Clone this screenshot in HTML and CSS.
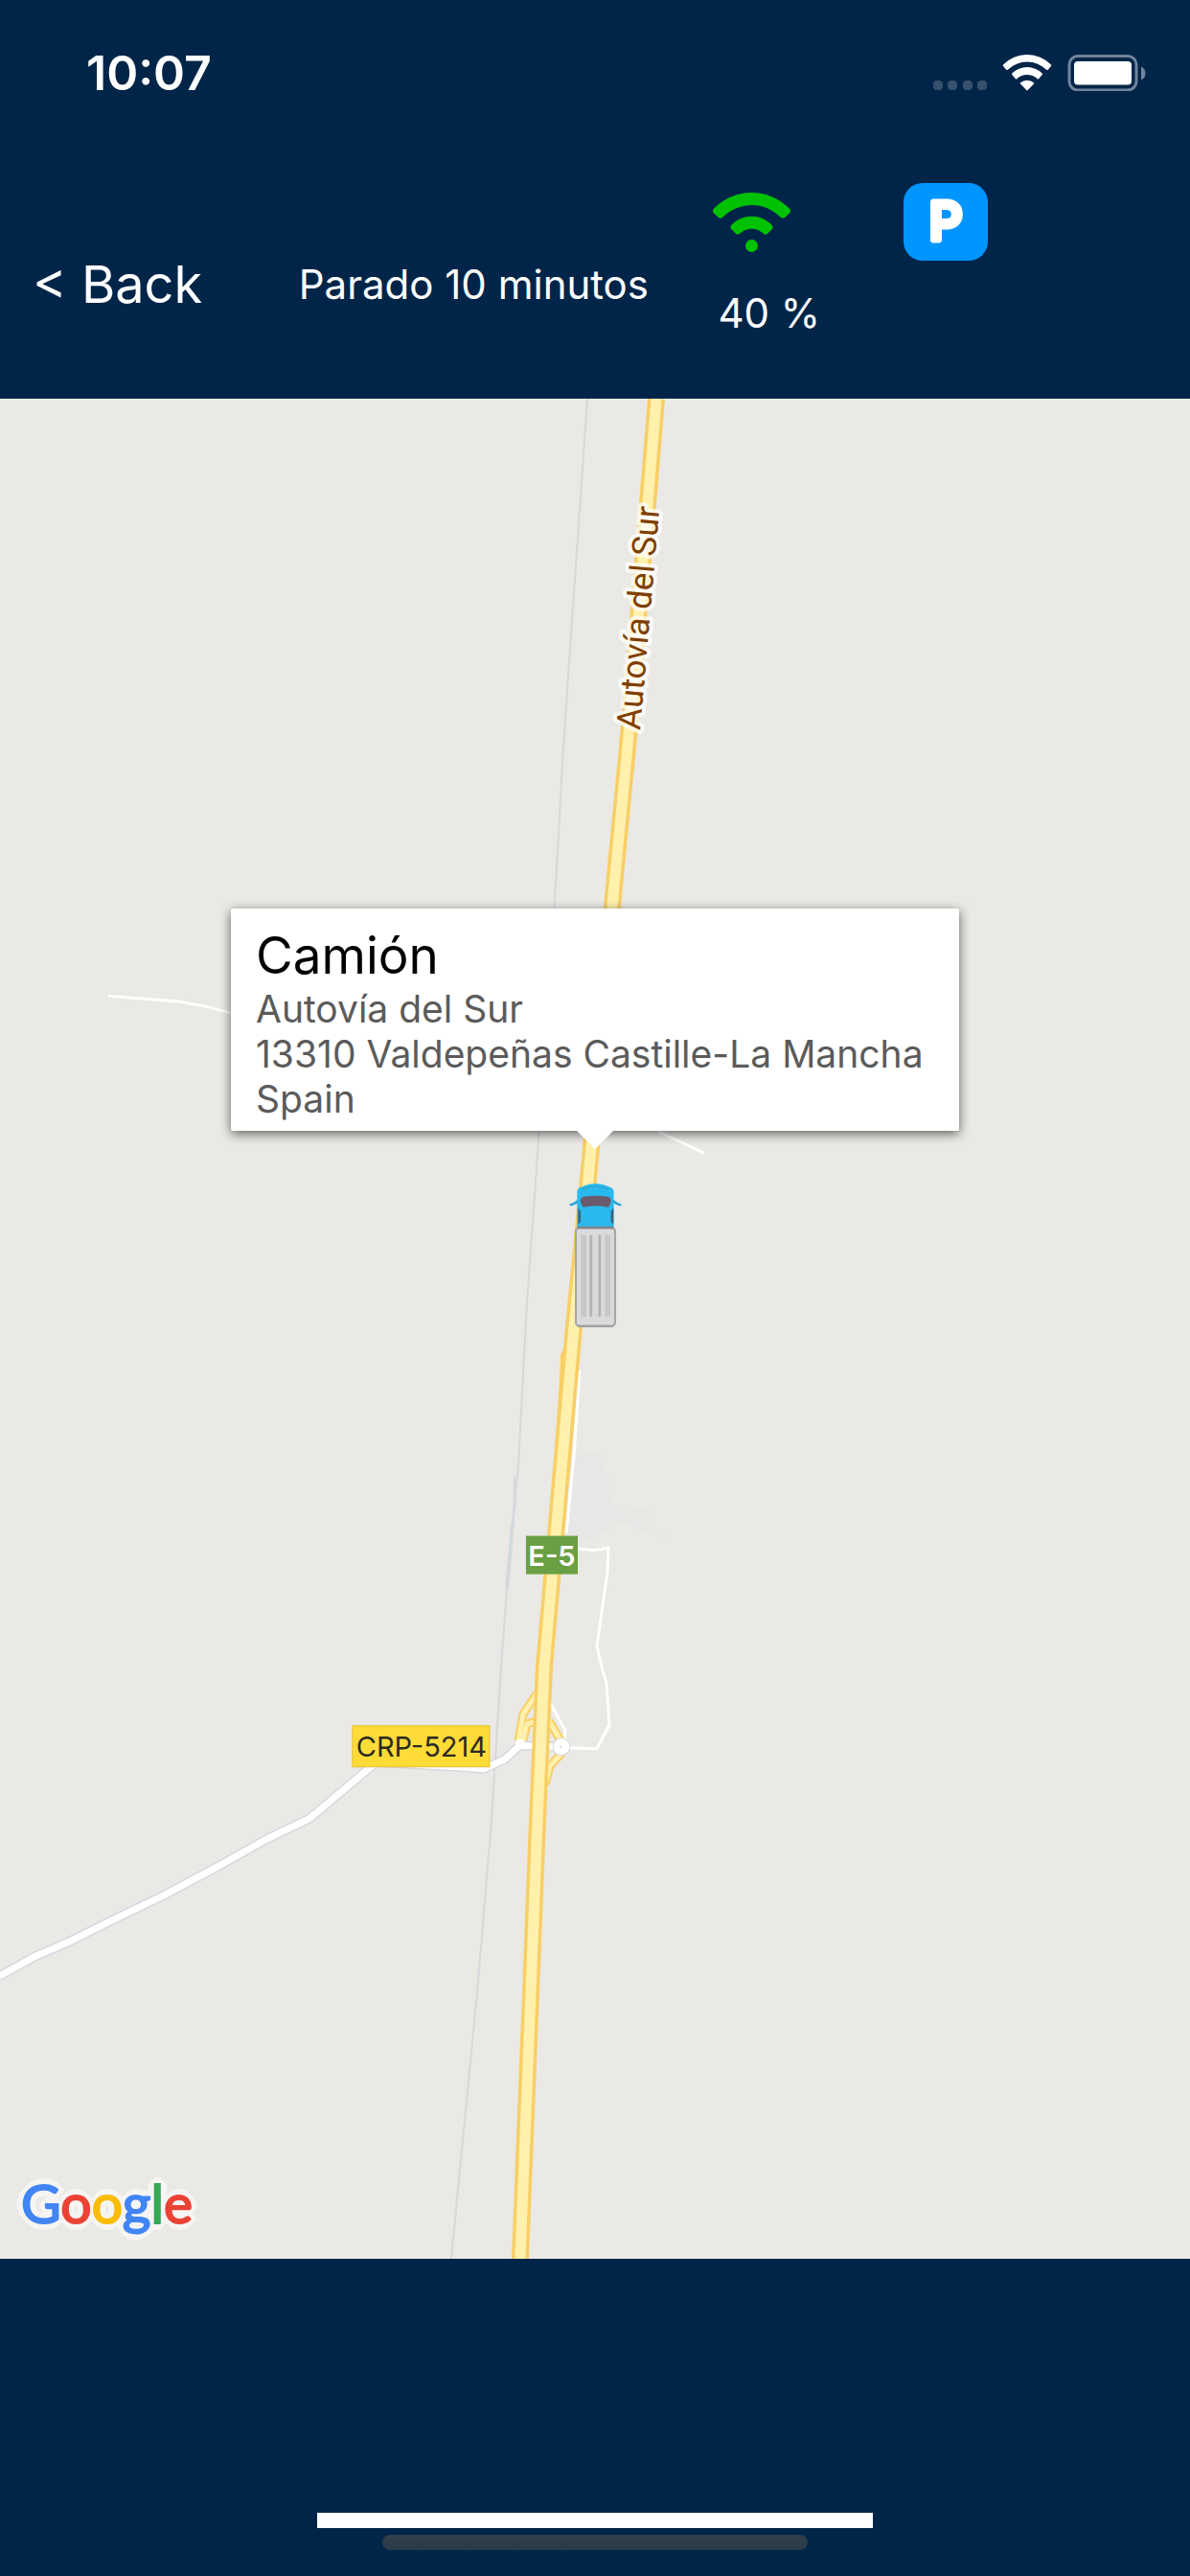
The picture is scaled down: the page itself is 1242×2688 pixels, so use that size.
FILE: index.html
```html
<!DOCTYPE html>
<html lang="es">
<head>
  <meta charset="UTF-8" />
  <meta name="viewport" content="width=device-width, initial-scale=1.0"/>
  <title>Camión</title>
  <link rel="stylesheet" href="styles.css">
</head>
<body>

  <header class="header">
    <div class="status-bar">
      <span class="clock">10:07</span>
      <svg class="status-icons" viewBox="0 0 222 38" aria-hidden="true">
        <g fill="#36506d">
          <rect x="0" y="27" width="10" height="10" rx="4"/>
          <rect x="15" y="27" width="10" height="10" rx="4"/>
          <rect x="31" y="27" width="10" height="10" rx="4"/>
          <rect x="46" y="27" width="10" height="10" rx="4"/>
        </g>
        <g fill="#fff">
          <path d="M73 10.500a35 35 0 0 1 50 0q.6.800 0 1.600l-3.200 3.600q-.8.800-1.600 0a29 29 0 0 0-40.400 0q-.8.800-1.600 0L73 12.100q-.6-.8 0-1.600z"/>
          <path d="M82.300 19.500a22.500 22.500 0 0 1 31.400 0q.7.700 0 1.500l-3.600 4.200q-.7.600-1.500 0a15.500 15.500 0 0 0-21.200 0q-.8.600-1.500 0L82.300 21q-.7-.8 0-1.500z"/>
          <path d="M91 29.300a10.500 10.500 0 0 1 14 0q.6.600 0 1.300l-6.300 6.400q-.7.700-1.400 0L91 30.600q-.6-.7 0-1.300z"/>
        </g>
        <rect x="142" y="1.500" width="70" height="35.500" rx="9" fill="none" stroke="#71839a" stroke-width="3"/>
        <rect x="147" y="7" width="60" height="24.500" rx="4" fill="#fff"/>
        <path d="M217 12.500q4.500 2 4.500 7t-4.500 7z" fill="#71839a"/>
      </svg>
    </div>

    <nav class="nav">
      <button type="button" class="back">&lt; Back</button>
      <span class="state">Parado 10 minutos</span>
      <div class="signal">
        <svg class="signal-icon" viewBox="0 0 81 62" aria-hidden="true">
          <g fill="#00c200">
            <path d="M1.200 16.500C23-5.500 58-5.500 79.800 16.500q2.400 2.700 0 5.200l-4.800 4.300q-2 1.600-4 0C54.500 8.500 26.500 8.500 10 26q-2 1.600-4 0l-4.800-4.300q-2.400-2.500 0-5.200z"/>
            <path d="M19.300 34c12-12.300 30.400-12.300 42.400 0q1.800 2 0 4l-4.900 5q-1.800 1.500-3.600 0c-7.200-7-18.200-7-25.400 0q-1.800 1.500-3.600 0l-4.900-5q-1.800-2 0-4z"/>
            <circle cx="40.500" cy="55.500" r="6.500"/>
          </g>
        </svg>
        <span class="signal-value">40 %</span>
      </div>
      <svg class="parking" viewBox="0 0 88 81">
        <rect width="88" height="81" rx="20"/>
        <text x="44" y="59">P</text>
      </svg>
    </nav>
  </header>

  <main class="map">
    <svg class="map-tiles" viewBox="0 417 1242 1940" preserveAspectRatio="xMidYMid slice" aria-label="Mapa">
      <!-- urban area -->
      <path d="M598 1512l36 6-5 15 14 16-3 22 40 3-4 6-20-1 42 23-7 4-43-18-32 20h-28z" fill="#e7e7e6"/>

      <!-- railway -->
      <path class="rail" d="M613 417L588 780L580 925L560 1220L550 1360L541 1530L529 1660L523 1740L513 1900L498 2080L471 2357"/>
      <path class="rail" d="M537 1540L536 1590L530 1660M538 1568L534 1592L528 1660"/>

      <!-- minor tracks -->
      <g class="track">
        <path d="M113 1040L188 1046L216 1051L242 1058"/>
        <path d="M687 1181L697 1186L712 1193L735 1204"/>
        <path d="M605 1430L599 1520L591 1600"/>
        <path d="M600 1616L618 1618L628 1617L635 1615L634 1640L623 1718L628 1740L633 1757L636 1800L623 1825L594 1824"/>
        <path d="M574 1777L590 1806L589 1816"/>
      </g>

      <!-- CRP-5214 -->
      <g class="local">
        <path class="casing" d="M0 2062L36 2042L71 2027L121 2002L171 1978L229 1947L279 1919L323 1898L393 1839L478 1844L505 1846L527 1836L542 1822L560 1822L586 1823"/>
        <path class="fill" d="M0 2062L36 2042L71 2027L121 2002L171 1978L229 1947L279 1919L323 1898L393 1839L478 1844L505 1846L527 1836L542 1822L560 1822L586 1823"/>
      </g>

      <!-- highway exits -->
      <g class="ramp">
        <path class="casing" d="M560 1768L546 1789L541 1817M558 1797L550 1799L546 1816M573 1796L586 1818M587 1829L574 1843L569 1862"/>
        <path class="fill" d="M560 1768L546 1789L541 1817M558 1797L550 1799L546 1816M573 1796L586 1818M587 1829L574 1843L569 1862"/>
      </g>
      <circle cx="543" cy="1820" r="5" fill="#fff"/>
      <circle cx="586" cy="1823" r="9" fill="#fff" stroke="#d5d8dc" stroke-width="1"/>
      <circle cx="585" cy="1823" r="1" fill="#c9ccd0"/>

      <!-- Autovía del Sur -->
      <path d="M590 1408L587 1415L586 1440L580 1530" fill="none" stroke="#f7cf66" stroke-width="4"/>
      <g class="highway">
        <path class="casing" d="M685 417L655 780L641 925L615 1220L599 1385L575 1660L568 1740L561 1900L554 2080L543 2357"/>
        <path class="fill" d="M685 417L655 780L641 925L615 1220L599 1385L575 1660L568 1740L561 1900L554 2080L543 2357"/>
      </g>

      <text class="road-name" transform="translate(668 763) rotate(-85)">Autovía del Sur</text>

      <rect x="549" y="1603" width="54" height="40" fill="#6a9f43"/>
      <text class="shield shield-e" x="576" y="1634">E-5</text>
      <rect x="368" y="1801" width="143" height="43" fill="#ffdb38" stroke="#e2c138"/>
      <text class="shield" x="440" y="1833">CRP-5214</text>
    </svg>

    <div class="marker">
      <div class="callout">
        <h1>Camión</h1>
        <p>Autovía del Sur<br>13310 Valdepeñas Castille-La Mancha<br>Spain</p>
      </div>
      <svg class="truck" viewBox="0 0 170 456" aria-hidden="true">
        <path d="M4 66q14-3 28-15l4 8q-16 13-30 14zM166 66q-14-3-28-15l-4 8q16 13 30 14z" fill="#2ba6d8"/>
        <path d="M28 138V30q0-14 17-18Q84-6 125 12q17 4 17 18v108z" fill="#28b9ee"/>
        <path d="M44 20q40-15 82 0" fill="none" stroke="#35a5cf" stroke-width="4"/>
        <path d="M38 58q0-14 14-15 34-5 68 0 14 1 14 15l-8 19q-40-10-80 0z" fill="#695b6d"/>
        <path d="M31 78l8 12v32l-8 8zM141 78l-8 12v32l8 8z" fill="#42617d"/>
        <rect x="24" y="141" width="122" height="305" rx="10" fill="#dadadc" stroke="#a5a5a6" stroke-width="6"/>
        <path d="M28 140h114" stroke="#858588" stroke-width="7"/>
        <path d="M48 163v254M123 163v254" stroke="#c7c7c9" stroke-width="17"/>
        <path d="M71 163v254M98 163v254" stroke="#b3b3b5" stroke-width="8"/>
        <path d="M30 447h110" stroke="#a0a0a1" stroke-width="6"/>
      </svg>
    </div>

    <a class="logo" href="#"><span class="blue">G</span><span class="red">o</span><span class="yellow">o</span><span class="blue">g</span><span class="green">l</span><span class="red">e</span></a>
  </main>

  <footer class="footer">
    <div class="bar"></div>
    <div class="home-indicator"></div>
  </footer>

</body>
</html>
```
FILE: styles.css
```css
* { box-sizing: border-box; }

body {
  margin: 0;
  padding: 0;
  font-family: Inter, 'Liberation Sans', sans-serif;
  background: #002548;
  color: white;
  display: flex;
  flex-direction: column;
  min-height: 100vh;
}

/* Header */
.status-bar {
  display: flex;
  justify-content: space-between;
  align-items: center;
  height: 152px;
  padding: 0 46px 0 90px;
}

.clock {
  font-size: 50px;
  font-weight: 600;
}

.status-icons {
  width: 222px;
  height: 38px;
}

.nav {
  display: grid;
  grid-template-columns: 278fr 433fr 199fr 299fr;
  align-items: start;
  padding: 39px 0 64px 34px;
  font-size: 42px;
  line-height: 50px;
}

.back {
  margin: 0;
  padding: 0;
  border: 0;
  background: none;
  color: inherit;
  font-family: inherit;
  font-size: 54px;
  line-height: 50px;
  text-align: left;
  cursor: pointer;
}

.back,
.state {
  padding-top: 81px;
}

.signal {
  display: flex;
  flex-direction: column;
  gap: 39px;
  padding-top: 10px;
}

.signal-icon {
  width: 81px;
  height: 62px;
}

.signal-value {
  padding-left: 5px;
}

.parking {
  width: 88px;
  height: 81px;
  fill: #0095ff;
}

.parking text {
  font-size: 54px;
  font-weight: 400;
  fill: white;
  stroke: white;
  stroke-width: 7;
  stroke-linejoin: round;
  text-anchor: middle;
}

/* Map */
.map {
  position: relative;
  flex: 1;
  overflow: hidden;
  background: #eae9e5;
}

.map-tiles {
  position: absolute;
  width: 100%;
  height: 100%;
}

.rail {
  fill: none;
  stroke: #d5d9db;
  stroke-width: 2;
}

.track path {
  fill: none;
  stroke: white;
  stroke-width: 3;
  stroke-linejoin: round;
}

.local path,
.ramp path,
.highway path {
  fill: none;
  stroke-linejoin: round;
}

.local .casing { stroke: #d5d8dc; stroke-width: 10; }
.local .fill { stroke: white; stroke-width: 7; }

.ramp .casing { stroke: #f7cf66; stroke-width: 9; }
.ramp .fill { stroke: #fff0ac; stroke-width: 5; }

.highway .casing { stroke: #f7cf66; stroke-width: 18; }
.highway .fill { stroke: #fff0ac; stroke-width: 11; }

.road-name {
  font-family: Roboto, sans-serif;
  font-size: 35px;
  fill: #7f3f00;
  stroke: rgba(255, 255, 255, 0.75);
  stroke-width: 8;
  stroke-linejoin: round;
  paint-order: stroke;
}

.shield {
  font-size: 29px;
  fill: #2b2a20;
  text-anchor: middle;
}

.shield-e {
  font-weight: 600;
  fill: white;
}

.marker {
  position: absolute;
  top: 532px;
  left: 50%;
  transform: translateX(-50%);
  display: flex;
  flex-direction: column;
  align-items: center;
  gap: 54px;
}

.callout {
  position: relative;
  min-width: 760px;
  padding: 17px 26px 10px;
  border-radius: 2px;
  background: white;
  box-shadow: 0 3px 12px rgba(0, 0, 0, 0.6);
  white-space: nowrap;
}

.callout::after {
  content: '';
  position: absolute;
  top: 100%;
  left: 50%;
  margin-left: -19px;
  border: 19px solid transparent;
  border-top-color: white;
  border-bottom: 0;
}

.callout h1 {
  margin: 0;
  font-size: 53px;
  font-weight: 400;
  line-height: 64px;
  color: black;
}

.callout p {
  margin: 0;
  font-size: 39px;
  line-height: 47px;
  color: #5b5b5b;
}

.truck {
  width: 57px;
  height: 153px;
}

.logo {
  position: absolute;
  left: 22px;
  bottom: 23px;
  font-family: Lato, sans-serif;
  font-size: 57px;
  line-height: 72px;
  text-decoration: none;
  -webkit-text-stroke: 2px currentColor;
  filter: drop-shadow(3px 3px 0 #f6f5f3) drop-shadow(-3px -3px 0 #f6f5f3)
    drop-shadow(3px -3px 0 #f6f5f3) drop-shadow(-3px 3px 0 #f6f5f3);
}

.blue { color: #4285f4; }
.red { color: #ea4335; }
.yellow { color: #fbbc05; }
.green { color: #34a853; }

/* Footer */
.footer {
  display: flex;
  flex-direction: column;
  align-items: center;
  gap: 7px;
  padding: 265px 0 27px;
}

.bar {
  width: 580px;
  height: 16px;
  background: white;
}

.home-indicator {
  width: 444px;
  height: 16px;
  border-radius: 8px;
  background: linear-gradient(#313f4b, #2a3a49);
}
```
